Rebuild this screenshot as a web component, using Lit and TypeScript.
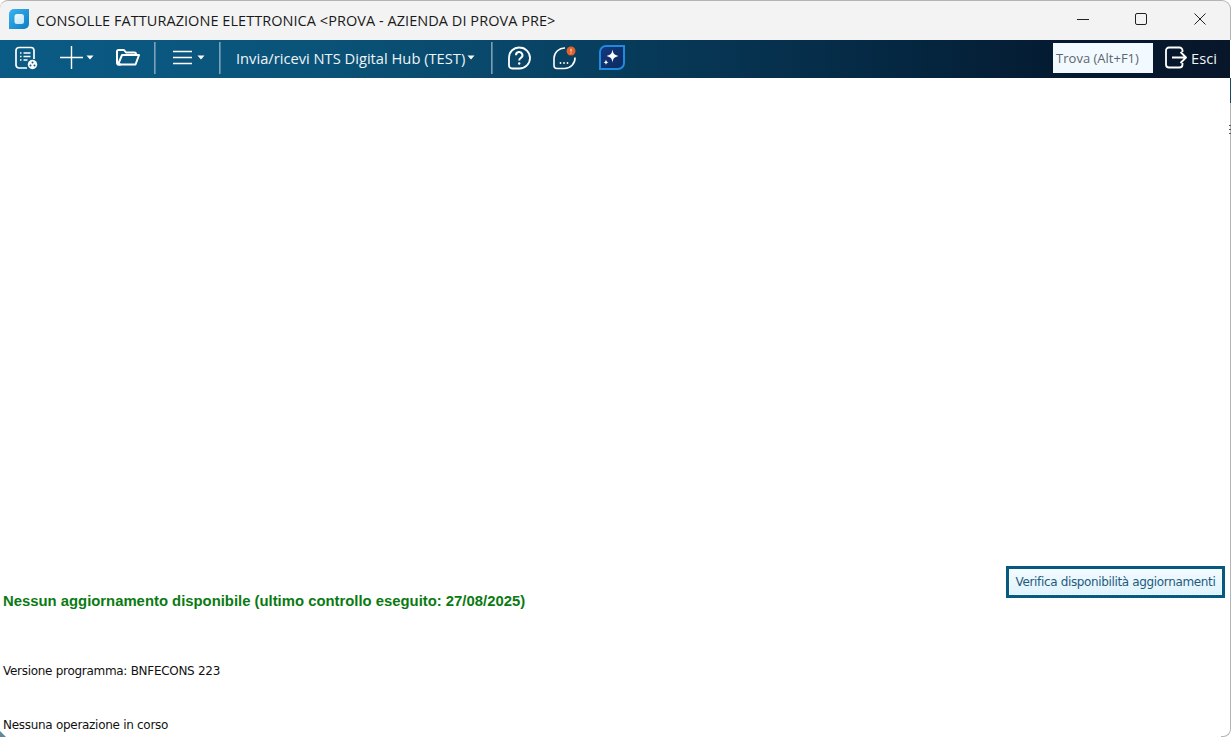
import { LitElement, html, css } from "lit";
import { customElement } from "lit/decorators.js";

const caret = html`<svg class="caret" width="8" height="5" viewBox="0 0 8 5"><path d="M0.5 0.5h7L4 4.500z" fill="#fff"/></svg>`;

@customElement("app-root")
export class AppRoot extends LitElement {
  static styles = css`
    :host { display: block; }
    .window { width: 1231px; height: 737px; display: flex; flex-direction: column; background: #fff; overflow: hidden; box-sizing: border-box; position: relative; }
    .titlebar { height: 40px; box-sizing: border-box; flex: none; display: flex; align-items: center; background: #f3f3f3; border-top: 1px solid #b4b4b4; border-right: 1px solid #b4b4b4; border-radius: 8px 9px 0 0; padding: 0 1px 0 9px; color: #1a1a1a; font: 14.5px "Open Sans", "Noto Sans", sans-serif; }
    .logo { margin-right: 7px; margin-bottom: 3px; flex: none; display: block; }
    .title { flex: 1; white-space: nowrap; letter-spacing: 0.05px; }
    .winbtns { display: flex; align-items: flex-start; align-self: flex-start; }
    .winbtn { width: 58.5px; height: 36px; display: flex; align-items: center; justify-content: center; }
    .toolbar { height: 38px; box-sizing: border-box; padding-bottom: 3px; flex: none; margin-right: 1px; display: flex; align-items: center; background: linear-gradient(90deg, #0a5b85 0%, #0a5379 25%, #09486b 40%, #073a59 52%, #052a45 70%, #04192f 88%, #08162a 100%); color: #eef4f8; font: 14.7px "Open Sans", "Noto Sans", sans-serif; }
    .tb { display: flex; align-items: center; flex: none; }
    .caret { display: block; flex: none; }
    .sep { width: 2px; height: 32px; flex: none; background: linear-gradient(90deg, rgba(150,180,198,.95), rgba(150,180,198,.35)); }
    .i1 { margin-left: 14px; }
    .i2 { margin-left: 22px; gap: 3px; }
    .i3 { margin-left: 22px; }
    .s1 { margin-left: 14px; }
    .i4 { margin-left: 17px; gap: 5px; }
    .s2 { margin-left: 14px; }
    .menu { margin-left: 15px; gap: 2px; white-space: nowrap; }
    .s3 { margin-left: 16px; }
    .i5 { margin-left: 14px; }
    .i6 { margin-left: 21px; }
    .i7 { margin-left: 22px; }
    .spacer { flex: 1; }
    .search { width: 100px; height: 30px; box-sizing: border-box; flex: none; background: #f3faff; color: #5a6670; font-size: 13px; display: flex; align-items: center; padding-left: 3px; white-space: nowrap; margin-top: 1px; }
    .exit { margin-left: 12px; margin-right: 13px; gap: 4px; }
    .content { flex: 1; position: relative; display: flex; flex-direction: column; justify-content: flex-end; color: #111; padding-bottom: 5px; }
    .top-row { display: flex; justify-content: space-between; align-items: flex-start; padding: 0 6px 0 3px; }
    .status { margin-top: 26px; font: bold 14.85px "Liberation Sans", sans-serif; color: #0a7a12; line-height: 18px; white-space: nowrap; }
    .btn { width: 219px; height: 32px; box-sizing: border-box; border: 3px solid #06597f; outline: 1px dotted #fff; outline-offset: -4px; background: linear-gradient(#f3fbff, #dff3fd); color: #1f5a7c; font: 12px "DejaVu Sans", sans-serif; letter-spacing: -0.35px; display: flex; align-items: center; justify-content: center; white-space: nowrap; }
    .line { padding-left: 3px; line-height: 14px; white-space: nowrap; font: 12px "DejaVu Sans", sans-serif; letter-spacing: -0.29px; }
    .v { margin-top: 54px; }
    .n { margin-top: 40px; }
    .edge { position: absolute; top: 0; right: 0; bottom: 0; width: 10px; box-sizing: border-box; border-right: 1px solid #b4b4b4; border-bottom: 1px solid #b4b4b4; border-bottom-right-radius: 8px; }
    .edge::before { content: ""; position: absolute; top: 0; right: -1px; width: 1px; height: 25px; background: #1c4a5c; }
    .edge::after { content: ""; position: absolute; top: 47px; right: -1px; width: 2px; height: 1px; background: #4a5a66; box-shadow: 0 4px 0 #4a5a66, 0 8px 0 #4a5a66; }
    .corner { position: absolute; left: 0; bottom: 0; display: block; }
  `;

  render() {
    return html`<div class="window">
      <div class="titlebar">
        <svg class="logo" width="20" height="20" viewBox="0 0 20 20">
          <defs>
            <linearGradient id="lg" x1="0" y1="0" x2="1" y2="1"><stop offset="0" stop-color="#3bb4ef"/><stop offset="1" stop-color="#0b7cc4"/></linearGradient>
            <linearGradient id="lg2" x1="0" y1="0" x2="1" y2="1"><stop offset="0" stop-color="#f2fbff"/><stop offset="1" stop-color="#bfe4f6"/></linearGradient>
          </defs>
          <path d="M5 0h15v15a5 5 0 0 1-5 5H0V5a5 5 0 0 1 5-5z" fill="url(#lg)"/>
          <rect x="5.500" y="5" width="9.500" height="10" rx="2.500" fill="url(#lg2)"/>
        </svg>
        <div class="title">CONSOLLE FATTURAZIONE ELETTRONICA &lt;PROVA - AZIENDA DI PROVA PRE&gt;</div>
        <div class="winbtns">
          <div class="winbtn"><svg width="12" height="12" viewBox="0 0 12 12"><path d="M0 6.500h12" stroke="#222" stroke-width="1"/></svg></div>
          <div class="winbtn"><svg width="12" height="12" viewBox="0 0 12 12"><rect x=".5" y=".5" width="11" height="11" rx="1.500" fill="none" stroke="#222"/></svg></div>
          <div class="winbtn"><svg width="12" height="12" viewBox="0 0 12 12"><path d="M.5.5l11 11M11.500.5l-11 11" stroke="#222" fill="none"/></svg></div>
        </div>
      </div>
      <div class="toolbar">
        <div class="tb i1"><svg width="24" height="24" viewBox="0 0 24 24" fill="none" stroke="#fff" stroke-width="1.700">
          <path d="M13 22H5a3 3 0 0 1-3-3V4.500a3 3 0 0 1 3-3h12a3 3 0 0 1 3 3V13"/>
          <path d="M6 7h1.500M9.500 7h7M6 10.500h1.500M9.500 10.500h7M6 14h1.500M9.500 14h4" stroke-width="1.500"/>
          <circle cx="18.500" cy="18.500" r="4.700" fill="#fff" stroke="none"/>
          <circle cx="18.500" cy="16.500" r="1" fill="#0a5b85" stroke="none"/>
          <circle cx="16.500" cy="19.500" r="1" fill="#0a5b85" stroke="none"/>
          <circle cx="20.500" cy="19.500" r="1" fill="#0a5b85" stroke="none"/>
        </svg></div>
        <div class="tb i2"><svg width="23" height="23" viewBox="0 0 23 23"><path d="M0 11.500h23M11.500 0v23" stroke="#fff" stroke-width="1.400"/></svg>${caret}</div>
        <div class="tb i3"><svg width="24" height="17" viewBox="0 0 24 17" fill="none" stroke="#fff" stroke-width="2" stroke-linejoin="round"><path d="M5 15.500H2.500a1.500 1.500 0 0 1-1.500-1.500V2.500A1.500 1.500 0 0 1 2.500 1H8l2 2.500h8.500A1.500 1.500 0 0 1 20 5v1"/><path d="M2 15.500L6 6h17l-3.500 9.500z"/></svg></div>
        <div class="sep s1"></div>
        <div class="tb i4"><svg width="19" height="15" viewBox="0 0 19 15"><path d="M0 1.500h19M0 7.500h19M0 13.500h19" stroke="#fff" stroke-width="1.500"/></svg>${caret}</div>
        <div class="sep s2"></div>
        <div class="tb menu">Invia/ricevi NTS Digital Hub (TEST)${caret}</div>
        <div class="sep s3"></div>
        <div class="tb i5"><svg width="24" height="24" viewBox="0 0 24 24" fill="none" stroke="#fff" stroke-width="1.800"><path d="M12.500 1.500a10 10 0 1 1 0 21H5a3 3 0 0 1-3-3v-8A10 10 0 0 1 12.500 1.500z"/><path d="M9 9.200a3.200 3.200 0 1 1 4.700 2.800c-1 .6-1.500 1.200-1.500 2.500" stroke-width="2"/><circle cx="12.200" cy="17.500" r="1.200" fill="#fff" stroke="none"/></svg></div>
        <div class="tb i6"><svg width="25" height="24" viewBox="0 0 25 24" fill="none" stroke="#fff" stroke-width="1.600">
          <path d="M13 2a10.500 10.500 0 0 0-11 10v7.500a3 3 0 0 0 3 3h7.500a10.500 10.500 0 0 0 10.500-11"/>
          <circle cx="8.500" cy="17" r=".9" fill="#fff" stroke="none"/><circle cx="12" cy="17" r=".9" fill="#fff" stroke="none"/><circle cx="15.500" cy="17" r=".9" fill="#fff" stroke="none"/>
          <circle cx="19" cy="5" r="4.500" fill="#e2602a" stroke="none"/><path d="M19 2.800v2.800M19 6.600v.9" stroke="#fff" stroke-width="1"/>
        </svg></div>
        <div class="tb i7"><svg width="26" height="25" viewBox="0 0 26 25">
          <defs><linearGradient id="st" x1="0" y1="0" x2="1" y2="1"><stop offset="0" stop-color="#12387e"/><stop offset="1" stop-color="#0c2a5e"/></linearGradient></defs>
          <path d="M7 1h18v17a6 6 0 0 1-6 6H1V7a6 6 0 0 1 6-6z" fill="url(#st)" stroke="#1f8ae0" stroke-width="2"/>
          <path d="M13.500 4.500c.7 4.300 1.700 5.300 6 6.500-4.300 1.200-5.300 2.200-6 6.500-.7-4.300-1.700-5.300-6-6.500 4.300-1.200 5.300-2.200 6-6.500z" fill="#fff"/>
          <path d="M7 14.500c.3 1.800.8 2.300 2.500 2.800-1.700.5-2.200 1-2.500 2.800-.3-1.800-.8-2.300-2.500-2.800 1.700-.5 2.200-1 2.500-2.800z" fill="#fff"/>
        </svg></div>
        <div class="spacer"></div>
        <div class="search">Trova (Alt+F1)</div>
        <div class="tb exit"><svg width="22" height="23" viewBox="0 0 22 23" fill="none" stroke="#fff" stroke-width="1.800" stroke-linejoin="round"><path d="M17.500 6V4.500a3 3 0 0 0-3-3H4a3 3 0 0 0-3 3v14a3 3 0 0 0 3 3h10.500a3 3 0 0 0 3-3V17"/><path d="M7 11.500h13.500M15.500 6l5.500 5.500-5.500 5.500"/></svg><span>Esci</span></div>
      </div>
      <div class="content">
        <div class="top-row">
          <div class="status">Nessun aggiornamento disponibile (ultimo controllo eseguito: 27/08/2025)</div>
          <div class="btn">Verifica disponibilità aggiornamenti</div>
        </div>
        <div class="line v">Versione programma: BNFECONS 223</div>
        <div class="line n">Nessuna operazione in corso</div>
        <div class="edge"></div>
        <svg class="corner" width="6" height="6" viewBox="0 0 6 6"><path d="M0 0L6 6H0z" fill="#5f8a9c"/></svg>
      </div>
    </div>`;
  }
}
